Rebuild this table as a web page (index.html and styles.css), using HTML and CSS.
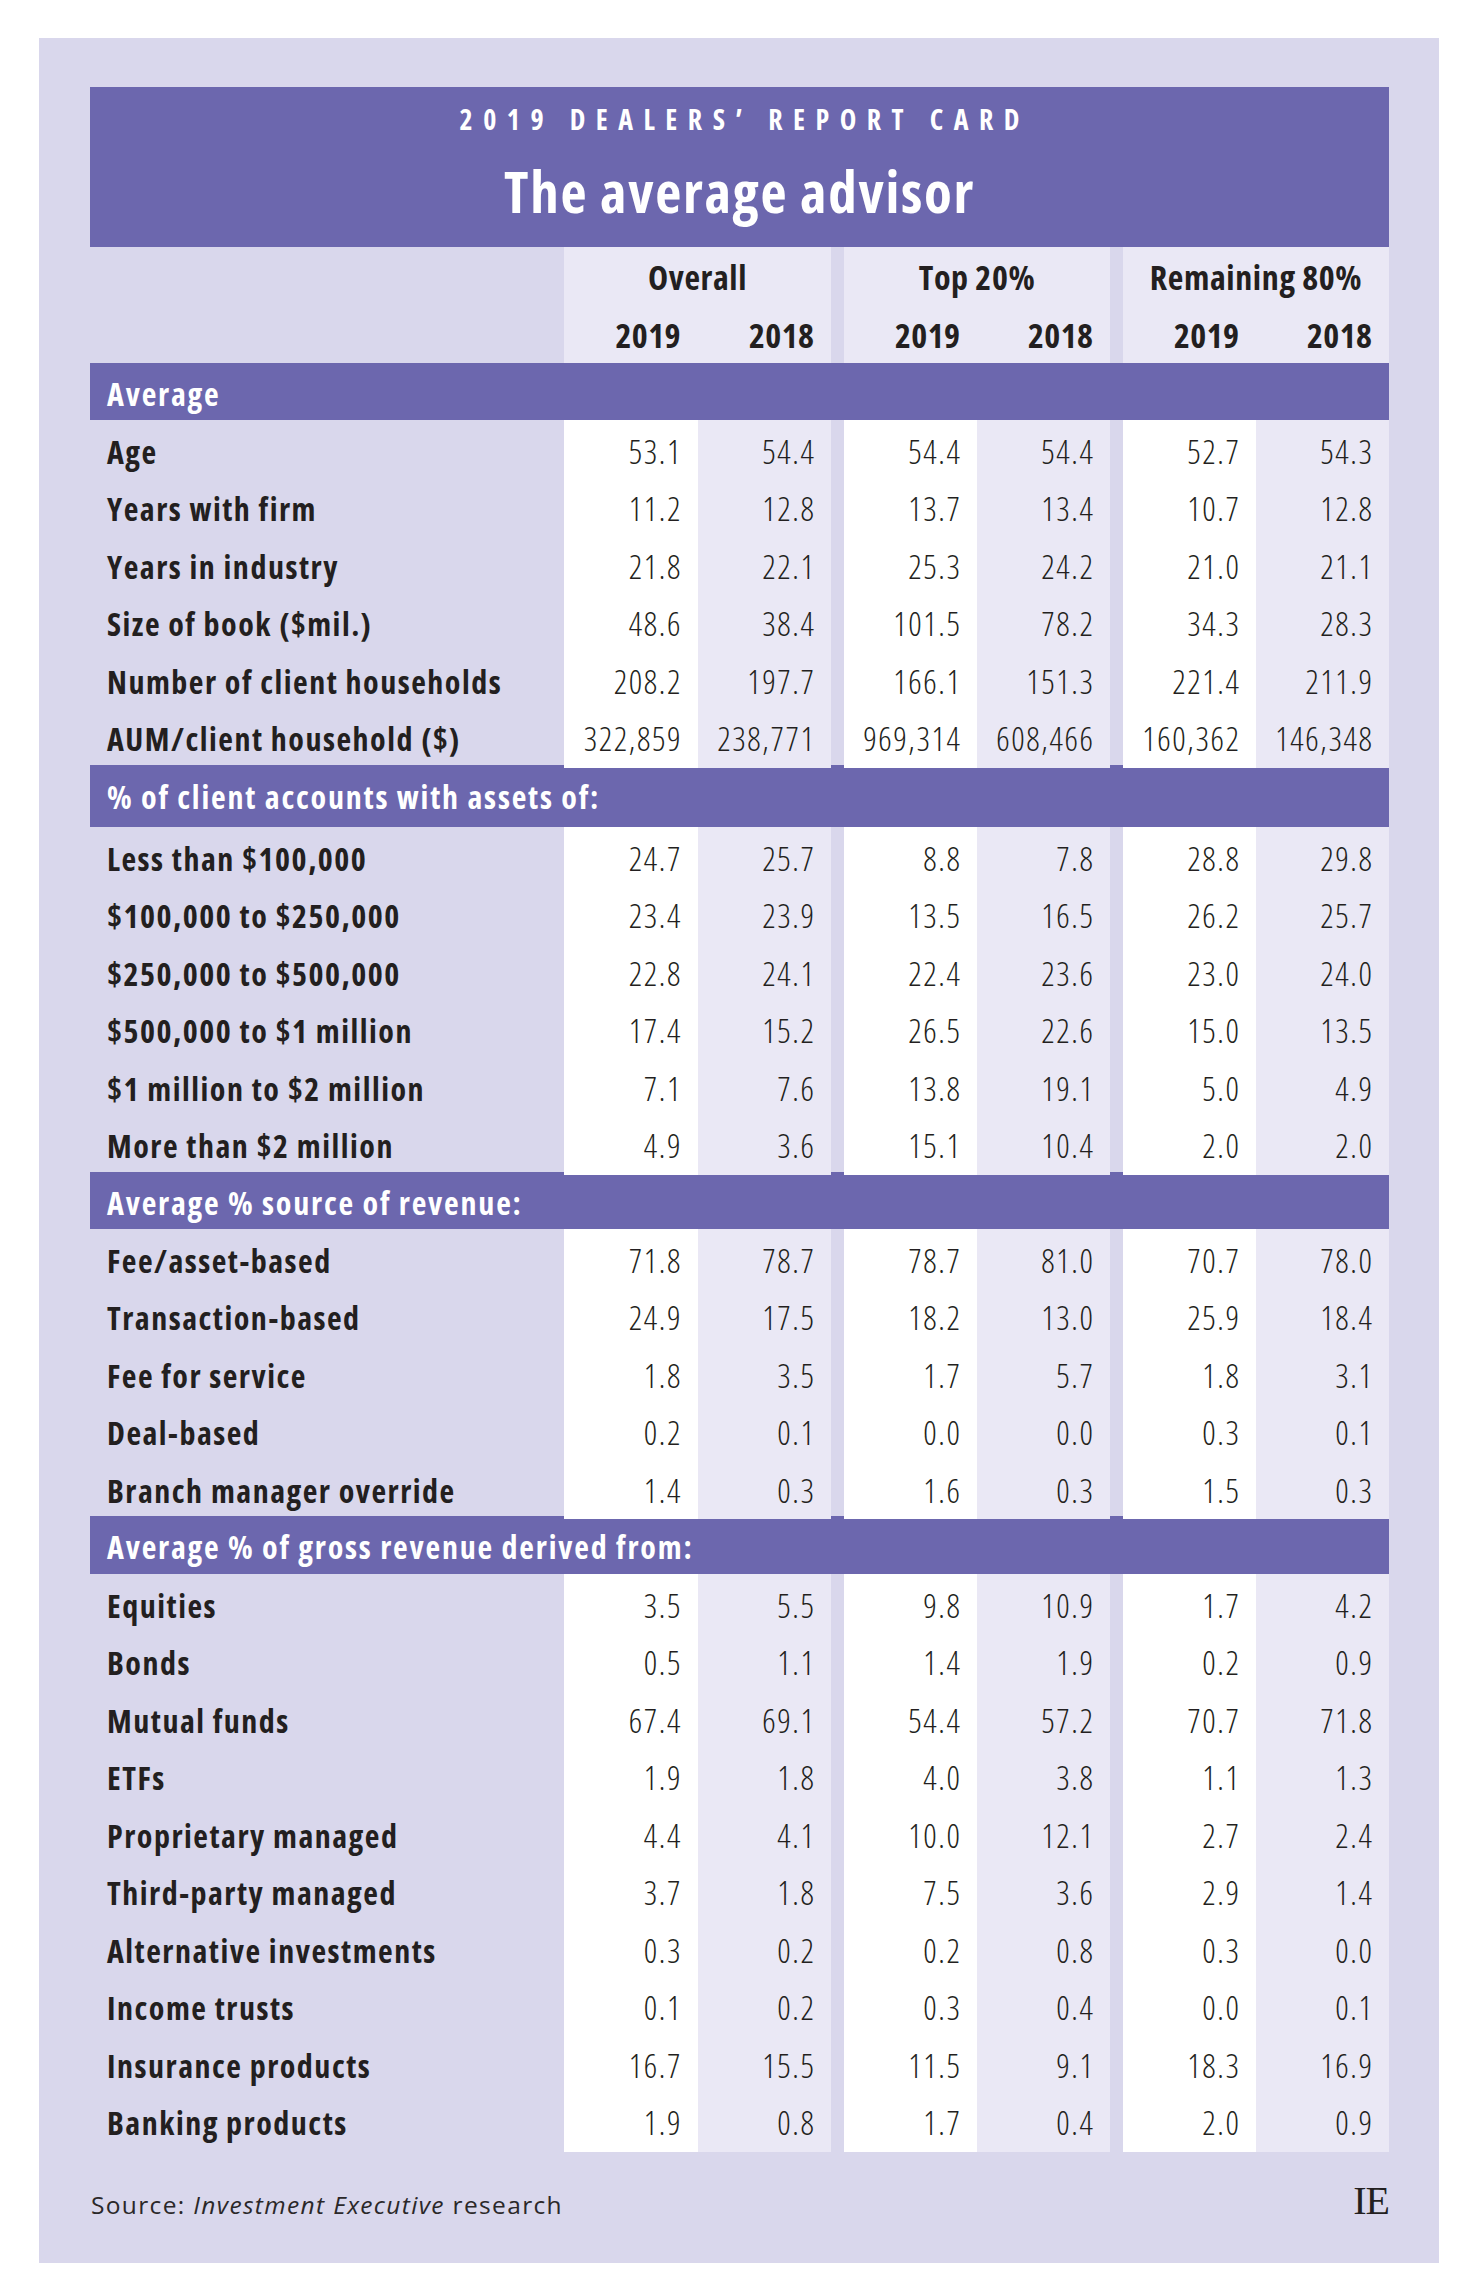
FILE: index.html
```html
<!DOCTYPE html>
<html lang="en">
<head>
<meta charset="utf-8">
<title>2019 Dealers' Report Card — The average advisor</title>
<link rel="stylesheet" href="styles.css">
</head>
<body>
<div class="panel">
  <div class="card-head">
    <div class="kicker">2019 DEALERS’ REPORT CARD</div>
    <h1 class="title">The average advisor</h1>
  </div>

  <div class="row colheads">
    <div class="lbl"></div>
    <div class="grp"><div class="gname">Overall</div><div class="years"><span>2019</span><span>2018</span></div></div>
    <div class="grp"><div class="gname">Top 20%</div><div class="years"><span>2019</span><span>2018</span></div></div>
    <div class="grp"><div class="gname">Remaining 80%</div><div class="years"><span>2019</span><span>2018</span></div></div>
  </div>

  <div class="band">Average</div>
  <div class="row"><div class="lbl">Age</div><div class="grp"><span class="a">53.1</span><span class="b">54.4</span></div><div class="grp"><span class="a">54.4</span><span class="b">54.4</span></div><div class="grp"><span class="a">52.7</span><span class="b">54.3</span></div></div>
  <div class="row"><div class="lbl">Years with firm</div><div class="grp"><span class="a">11.2</span><span class="b">12.8</span></div><div class="grp"><span class="a">13.7</span><span class="b">13.4</span></div><div class="grp"><span class="a">10.7</span><span class="b">12.8</span></div></div>
  <div class="row"><div class="lbl">Years in industry</div><div class="grp"><span class="a">21.8</span><span class="b">22.1</span></div><div class="grp"><span class="a">25.3</span><span class="b">24.2</span></div><div class="grp"><span class="a">21.0</span><span class="b">21.1</span></div></div>
  <div class="row"><div class="lbl">Size of book ($mil.)</div><div class="grp"><span class="a">48.6</span><span class="b">38.4</span></div><div class="grp"><span class="a">101.5</span><span class="b">78.2</span></div><div class="grp"><span class="a">34.3</span><span class="b">28.3</span></div></div>
  <div class="row"><div class="lbl">Number of client households</div><div class="grp"><span class="a">208.2</span><span class="b">197.7</span></div><div class="grp"><span class="a">166.1</span><span class="b">151.3</span></div><div class="grp"><span class="a">221.4</span><span class="b">211.9</span></div></div>
  <div class="row"><div class="lbl">AUM/client household ($)</div><div class="grp"><span class="a">322,859</span><span class="b">238,771</span></div><div class="grp"><span class="a">969,314</span><span class="b">608,466</span></div><div class="grp"><span class="a">160,362</span><span class="b">146,348</span></div></div>

  <div class="band band-tall">% of client accounts with assets of:</div>
  <div class="row"><div class="lbl">Less than $100,000</div><div class="grp"><span class="a">24.7</span><span class="b">25.7</span></div><div class="grp"><span class="a">8.8</span><span class="b">7.8</span></div><div class="grp"><span class="a">28.8</span><span class="b">29.8</span></div></div>
  <div class="row"><div class="lbl">$100,000 to $250,000</div><div class="grp"><span class="a">23.4</span><span class="b">23.9</span></div><div class="grp"><span class="a">13.5</span><span class="b">16.5</span></div><div class="grp"><span class="a">26.2</span><span class="b">25.7</span></div></div>
  <div class="row"><div class="lbl">$250,000 to $500,000</div><div class="grp"><span class="a">22.8</span><span class="b">24.1</span></div><div class="grp"><span class="a">22.4</span><span class="b">23.6</span></div><div class="grp"><span class="a">23.0</span><span class="b">24.0</span></div></div>
  <div class="row"><div class="lbl">$500,000 to $1 million</div><div class="grp"><span class="a">17.4</span><span class="b">15.2</span></div><div class="grp"><span class="a">26.5</span><span class="b">22.6</span></div><div class="grp"><span class="a">15.0</span><span class="b">13.5</span></div></div>
  <div class="row"><div class="lbl">$1 million to $2 million</div><div class="grp"><span class="a">7.1</span><span class="b">7.6</span></div><div class="grp"><span class="a">13.8</span><span class="b">19.1</span></div><div class="grp"><span class="a">5.0</span><span class="b">4.9</span></div></div>
  <div class="row"><div class="lbl">More than $2 million</div><div class="grp"><span class="a">4.9</span><span class="b">3.6</span></div><div class="grp"><span class="a">15.1</span><span class="b">10.4</span></div><div class="grp"><span class="a">2.0</span><span class="b">2.0</span></div></div>

  <div class="band">Average % source of revenue:</div>
  <div class="row"><div class="lbl">Fee/asset-based</div><div class="grp"><span class="a">71.8</span><span class="b">78.7</span></div><div class="grp"><span class="a">78.7</span><span class="b">81.0</span></div><div class="grp"><span class="a">70.7</span><span class="b">78.0</span></div></div>
  <div class="row"><div class="lbl">Transaction-based</div><div class="grp"><span class="a">24.9</span><span class="b">17.5</span></div><div class="grp"><span class="a">18.2</span><span class="b">13.0</span></div><div class="grp"><span class="a">25.9</span><span class="b">18.4</span></div></div>
  <div class="row"><div class="lbl">Fee for service</div><div class="grp"><span class="a">1.8</span><span class="b">3.5</span></div><div class="grp"><span class="a">1.7</span><span class="b">5.7</span></div><div class="grp"><span class="a">1.8</span><span class="b">3.1</span></div></div>
  <div class="row"><div class="lbl">Deal-based</div><div class="grp"><span class="a">0.2</span><span class="b">0.1</span></div><div class="grp"><span class="a">0.0</span><span class="b">0.0</span></div><div class="grp"><span class="a">0.3</span><span class="b">0.1</span></div></div>
  <div class="row"><div class="lbl">Branch manager override</div><div class="grp"><span class="a">1.4</span><span class="b">0.3</span></div><div class="grp"><span class="a">1.6</span><span class="b">0.3</span></div><div class="grp"><span class="a">1.5</span><span class="b">0.3</span></div></div>

  <div class="band">Average % of gross revenue derived from:</div>
  <div class="row"><div class="lbl">Equities</div><div class="grp"><span class="a">3.5</span><span class="b">5.5</span></div><div class="grp"><span class="a">9.8</span><span class="b">10.9</span></div><div class="grp"><span class="a">1.7</span><span class="b">4.2</span></div></div>
  <div class="row"><div class="lbl">Bonds</div><div class="grp"><span class="a">0.5</span><span class="b">1.1</span></div><div class="grp"><span class="a">1.4</span><span class="b">1.9</span></div><div class="grp"><span class="a">0.2</span><span class="b">0.9</span></div></div>
  <div class="row"><div class="lbl">Mutual funds</div><div class="grp"><span class="a">67.4</span><span class="b">69.1</span></div><div class="grp"><span class="a">54.4</span><span class="b">57.2</span></div><div class="grp"><span class="a">70.7</span><span class="b">71.8</span></div></div>
  <div class="row"><div class="lbl">ETFs</div><div class="grp"><span class="a">1.9</span><span class="b">1.8</span></div><div class="grp"><span class="a">4.0</span><span class="b">3.8</span></div><div class="grp"><span class="a">1.1</span><span class="b">1.3</span></div></div>
  <div class="row"><div class="lbl">Proprietary managed</div><div class="grp"><span class="a">4.4</span><span class="b">4.1</span></div><div class="grp"><span class="a">10.0</span><span class="b">12.1</span></div><div class="grp"><span class="a">2.7</span><span class="b">2.4</span></div></div>
  <div class="row"><div class="lbl">Third-party managed</div><div class="grp"><span class="a">3.7</span><span class="b">1.8</span></div><div class="grp"><span class="a">7.5</span><span class="b">3.6</span></div><div class="grp"><span class="a">2.9</span><span class="b">1.4</span></div></div>
  <div class="row"><div class="lbl">Alternative investments</div><div class="grp"><span class="a">0.3</span><span class="b">0.2</span></div><div class="grp"><span class="a">0.2</span><span class="b">0.8</span></div><div class="grp"><span class="a">0.3</span><span class="b">0.0</span></div></div>
  <div class="row"><div class="lbl">Income trusts</div><div class="grp"><span class="a">0.1</span><span class="b">0.2</span></div><div class="grp"><span class="a">0.3</span><span class="b">0.4</span></div><div class="grp"><span class="a">0.0</span><span class="b">0.1</span></div></div>
  <div class="row"><div class="lbl">Insurance products</div><div class="grp"><span class="a">16.7</span><span class="b">15.5</span></div><div class="grp"><span class="a">11.5</span><span class="b">9.1</span></div><div class="grp"><span class="a">18.3</span><span class="b">16.9</span></div></div>
  <div class="row"><div class="lbl">Banking products</div><div class="grp"><span class="a">1.9</span><span class="b">0.8</span></div><div class="grp"><span class="a">1.7</span><span class="b">0.4</span></div><div class="grp"><span class="a">2.0</span><span class="b">0.9</span></div></div>

  <div class="foot">
    <div class="source">Source: <em>Investment Executive</em> research</div>
    <div class="logo">IE</div>
  </div>
</div>
</body>
</html>
```

FILE: styles.css
```css
html, body {
  margin: 0;
  padding: 0;
  background: #ffffff;
}

body {
  font-family: "Open Sans", "DejaVu Sans Condensed", sans-serif;
  font-stretch: 75%;
  color: #231f20;
}

.panel {
  margin: 38px 0 0 39px;
  width: 1400px;
  height: 2225px;
  box-sizing: border-box;
  padding: 49px 50px 0 51px;
  background: #d9d7ec;
}

.card-head {
  height: 160px;
  background: #6c67ae;
  color: #ffffff;
  text-align: center;
  display: flex;
  flex-direction: column;
  align-items: center;
}

.kicker {
  margin-top: 16px;
  font-size: 28px;
  line-height: 32px;
  font-weight: 700;
  letter-spacing: 10.5px;
  padding-left: 10.5px;
}

.title {
  margin: 24px 0 0;
  font-size: 57px;
  line-height: 64px;
  font-weight: 700;
  letter-spacing: 1.7px;
}

.row {
  display: grid;
  grid-template-columns: 461px 267px 266px 266px;
  column-gap: 13px;
  height: 57.5px;
}

.lbl {
  padding-left: 17px;
  font-size: 32px;
  font-weight: 700;
  letter-spacing: 1.5px;
  line-height: 57.5px;
  padding-top: 3px;
  box-sizing: border-box;
  white-space: nowrap;
}

.grp {
  display: grid;
  grid-template-columns: 1fr 1fr;
}

.grp span {
  text-align: right;
  padding-right: 15.5px;
  font-size: 33px;
  font-weight: 300;
  letter-spacing: 1.6px;
  line-height: 57.5px;
  padding-top: 3px;
  box-sizing: border-box;
  color: #231f20;
}

.grp .a { background: #ffffff; }
.grp .b { background: #eae8f5; }

.colheads {
  height: 115.5px;
}

.colheads .grp {
  display: flex;
  flex-direction: column;
  background: #eae8f5;
}

.gname {
  text-align: center;
  font-size: 34px;
  font-weight: 700;
  letter-spacing: 0.6px;
  line-height: 40px;
  margin-top: 10px;
  white-space: nowrap;
}

.years {
  display: grid;
  grid-template-columns: 1fr 1fr;
  margin-top: 18px;
}

.colheads .years span {
  background: transparent;
  font-size: 34px;
  font-weight: 700;
  letter-spacing: 0.4px;
  padding-right: 16.6px;
  line-height: 40px;
  padding-top: 0;
  color: #231f20;
}

.band {
  height: 57.4px;
  background: #6c67ae;
  color: #ffffff;
  font-size: 32px;
  font-weight: 700;
  letter-spacing: 1.8px;
  line-height: 57.4px;
  padding-left: 17px;
  padding-top: 2px;
  box-sizing: border-box;
  white-space: nowrap;
}

.band-tall {
  height: 61.7px;
  line-height: 59.7px;
}

.foot {
  display: flex;
  justify-content: space-between;
  align-items: baseline;
  padding: 28px 0 0 1px;
}

.source {
  font-size: 24.5px;
  font-weight: 400;
  font-stretch: 100%;
  letter-spacing: 1.35px;
  color: #2b2829;
}

.source em {
  font-style: italic;
}

.logo {
  font-family: "Liberation Serif", "DejaVu Serif", serif;
  font-stretch: normal;
  font-size: 40px;
  color: #231f20;
  letter-spacing: -1px;
}
```
